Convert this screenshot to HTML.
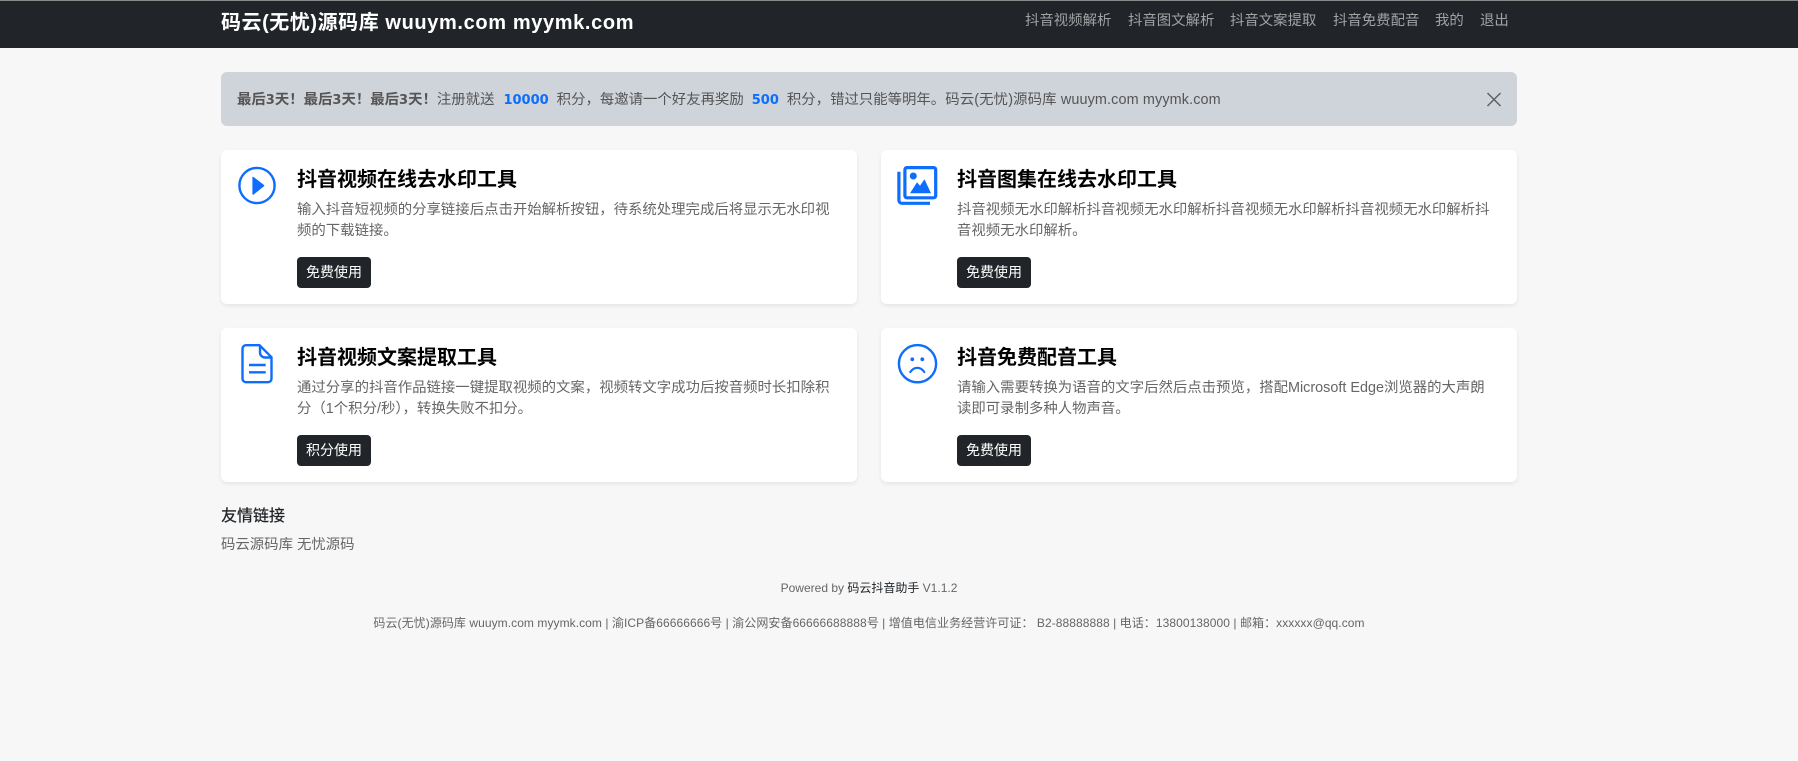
<!DOCTYPE html>
<html lang="zh-CN"><head><meta charset="utf-8"><title>码云(无忧)源码库</title>
<style>
html,body{margin:0;padding:0;width:1798px;height:761px;overflow:hidden;background:#f7f7f7}
body{position:relative;font-family:"Liberation Sans","Noto Sans CJK SC",sans-serif;color:#666;font-size:14.4px}
.a{position:absolute;white-space:nowrap;line-height:20px}
.nav{position:absolute;left:0;top:0;width:1798px;height:48px;background:#212529;border-top:1px solid #888;box-sizing:border-box}
.brand{left:221px;top:12px;font-size:20px;font-weight:700;color:#fff;line-height:22px;letter-spacing:.55px}
.brand span{letter-spacing:.63px}
.l{top:11px;color:#a0a2a4;font-size:14.4px}
.alert{position:absolute;left:221px;top:72px;width:1296px;height:54px;background:#cfd3da;border-radius:6px}
.card{position:absolute;width:636px;height:154px;background:#fff;border-radius:6px;box-shadow:0 2px 4px rgba(0,0,0,.075)}
.t{font-size:20px;font-weight:700;color:#000;line-height:24px}
.d{color:#666;font-size:14.4px;line-height:21px}
.b{position:absolute;width:74px;height:31px;background:#212529;border-radius:4px;color:#fff;font-size:14px;line-height:31px;text-align:center}
b.n{color:#0d6efd;margin:0 4px;font-family:"DejaVu Sans",sans-serif;font-size:13px}
i{font-style:normal;font-family:"DejaVu Sans",sans-serif;font-size:13px}
svg{position:absolute;left:0;top:0;overflow:visible}
</style></head><body>
<div class="nav"></div>
<div class="a brand">码云(无忧)源码库 <span>wuuym.com myymk.com</span></div>
<div class="a l" style="left:1025px">抖音视频解析</div>
<div class="a l" style="left:1128px">抖音图文解析</div>
<div class="a l" style="left:1230px">抖音文案提取</div>
<div class="a l" style="left:1333px">抖音免费配音</div>
<div class="a l" style="left:1435px">我的</div>
<div class="a l" style="left:1480px">退出</div>

<div class="alert"></div>
<div class="a" style="left:237px;top:90px;font-size:14.4px;color:#555"><b>最后<i>3</i>天！最后<i>3</i>天！最后<i>3</i>天！</b>注册就送 <b class="n" style="margin-left:5px">10000</b> 积分，每邀请一个好友再奖励 <b class="n">500</b> 积分，错过只能等明年。<span style="letter-spacing:.13px">码云(无忧)源码库 wuuym.com myymk.com</span></div>

<div class="card" style="left:221px;top:150px"></div>
<div class="card" style="left:881px;top:150px"></div>
<div class="card" style="left:221px;top:328px"></div>
<div class="card" style="left:881px;top:328px"></div>

<div class="a t" style="left:297px;top:168px">抖音视频在线去水印工具</div>
<div class="a d" style="left:297px;top:200px">输入抖音短视频的分享链接后点击开始解析按钮，待系统处理完成后将显示无水印视<br>频的下载链接。</div>
<div class="b" style="left:297px;top:257px">免费使用</div>

<div class="a t" style="left:957px;top:168px">抖音图集在线去水印工具</div>
<div class="a d" style="left:957px;top:200px">抖音视频无水印解析抖音视频无水印解析抖音视频无水印解析抖音视频无水印解析抖<br>音视频无水印解析。</div>
<div class="b" style="left:957px;top:257px">免费使用</div>

<div class="a t" style="left:297px;top:346px">抖音视频文案提取工具</div>
<div class="a d" style="left:297px;top:378px">通过分享的抖音作品链接一键提取视频的文案，视频转文字成功后按音频时长扣除积<br>分（1个积分/秒），转换失败不扣分。</div>
<div class="b" style="left:297px;top:435px">积分使用</div>

<div class="a t" style="left:957px;top:346px">抖音免费配音工具</div>
<div class="a d" style="left:957px;top:378px">请输入需要转换为语音的文字后然后点击预览，搭配Microsoft Edge浏览器的大声朗<br>读即可录制多种人物声音。</div>
<div class="b" style="left:957px;top:435px">免费使用</div>

<div class="a" style="left:221px;top:507px;font-size:16px;color:#212529;-webkit-text-stroke:.25px #212529">友情链接</div>
<div class="a" style="left:221px;top:535px;font-size:14.4px">码云源码库 无忧源码</div>

<div class="a" style="left:0;width:1738px;text-align:center;top:578px;font-size:12px">Powered by <span style="color:#212529">码云抖音助手</span> V1.1.2</div>
<div class="a" style="left:0;width:1738px;text-align:center;top:613px;font-size:12px;letter-spacing:.065px">码云(无忧)源码库 wuuym.com myymk.com | 渝ICP备66666666号 | 渝公网安备66666688888号 | 增值电信业务经营许可证： B2-88888888 | 电话：13800138000 | 邮箱：xxxxxx@qq.com</div>

<svg width="1798" height="761" fill="none">
<path d="M1487.5 93l13 13M1500.5 93l-13 13" stroke="#5b6168" stroke-width="1.5"/>
<circle cx="257" cy="185.5" r="17.6" stroke="#0d6efd" stroke-width="2.4"/>
<path d="M252.4 177.5a.8.8 0 0 1 1.2-.5l10.4 8a.8.8 0 0 1 0 1.2l-10.4 8.4a.8.8 0 0 1-1.2-.5z" fill="#0d6efd"/>
<rect x="904.9" y="167.6" width="30.8" height="30.2" rx="2" stroke="#0d6efd" stroke-width="3.2"/>
<path d="M898.9 171.7v28.6a3 3 0 0 0 3 3H930" stroke="#0d6efd" stroke-width="3.2"/>
<circle cx="913.3" cy="176" r="3.5" fill="#0d6efd"/>
<path d="M910 193.3l7-11 3 3.5 4.5-6.5 6.5 14z" fill="#0d6efd"/>
<path d="M246 345.2h13.5l12 12v21.5a3.5 3.5 0 0 1-3.5 3.5h-22a3.5 3.5 0 0 1-3.5-3.5v-30a3.5 3.5 0 0 1 3.5-3.5z" stroke="#0d6efd" stroke-width="2.4"/>
<path d="M260 345.5v7a5 5 0 0 0 5 5h6.5" stroke="#0d6efd" stroke-width="2.4"/>
<path d="M249 365h16.7M249 372.3h16.7" stroke="#0d6efd" stroke-width="2.4"/>
<circle cx="917.5" cy="363.7" r="18.6" stroke="#0d6efd" stroke-width="2.4"/>
<circle cx="912.3" cy="359.3" r="1.9" fill="#0d6efd"/><circle cx="922.3" cy="359.3" r="1.9" fill="#0d6efd"/>
<path d="M910.3 372c2-2.8 4.4-4.2 7-4.2s5 1.4 7 4.2" stroke="#0d6efd" stroke-width="2.2" stroke-linecap="round"/>
</svg>
</body></html>
